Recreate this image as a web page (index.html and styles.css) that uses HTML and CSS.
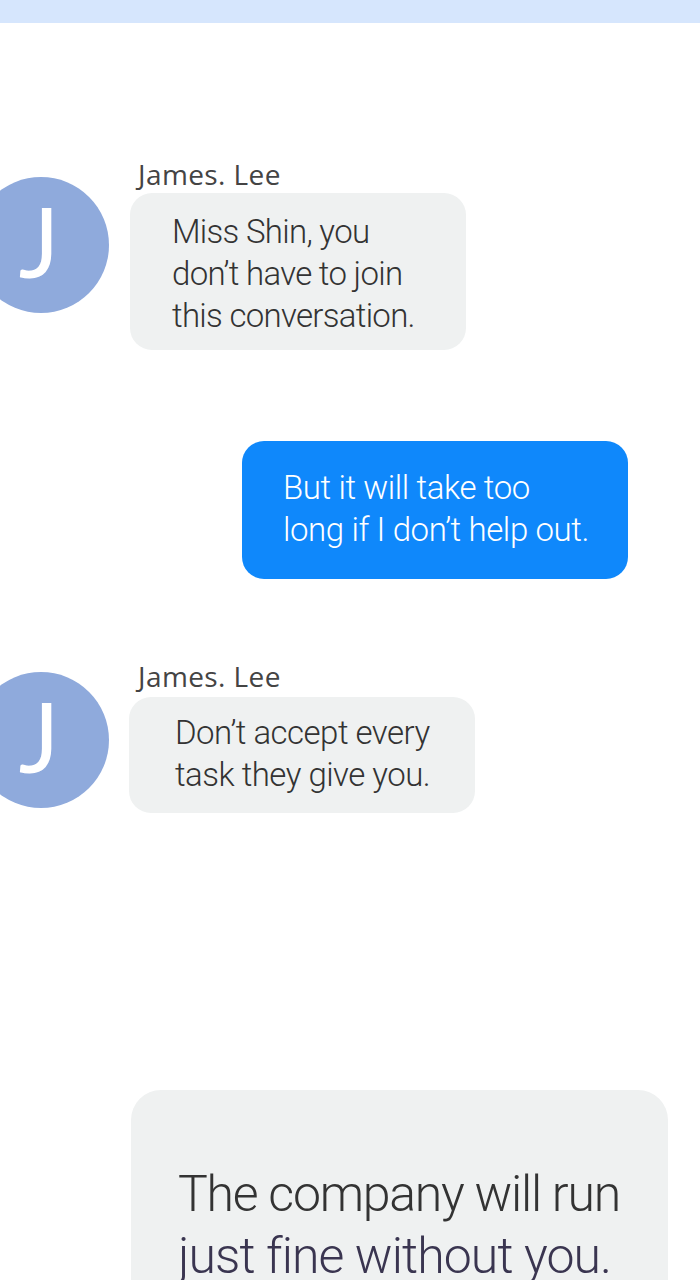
FILE: index.html
```html
<!DOCTYPE html>
<html lang="en">

<head>
    <meta charset="UTF-8">
    <title>Chat</title>
    <link rel="stylesheet" href="styles.css">
</head>

<body>
    <div class="top-bar"></div>

    <div class="msg msg-first">
        <div class="avatar">J</div>
        <div class="msg-body">
            <div class="name">James. Lee</div>
            <div class="bubble bubble-one">Miss Shin, you<br>don’t have to join<br>this conversation.</div>
        </div>
    </div>

    <div class="bubble bubble-me">But it will take too<br>long if I don’t help out.</div>

    <div class="msg msg-third">
        <div class="avatar">J</div>
        <div class="msg-body">
            <div class="name">James. Lee</div>
            <div class="bubble bubble-two">Don’t accept every<br>task they give you.</div>
        </div>
    </div>

    <div class="bubble bubble-big">The company will run<br><span class="dark">just fine without you.</span></div>
</body>

</html>
```
FILE: styles.css
```css
* {
    margin: 0;
    padding: 0;
    box-sizing: border-box;
}

html,
body {
    height: 1280px;
    overflow: hidden;
}

body {
    background-color: #fff;
    font-family: Roboto, "Liberation Sans", sans-serif;
    font-weight: 300;
    color: #333;
}

.top-bar {
    height: 23px;
    background-color: #d6e6fd;
}

.msg {
    display: flex;
    align-items: flex-start;
}

.msg-first {
    margin-top: 135px;
}

.msg-third {
    margin-top: 81px;
}

.avatar {
    flex: none;
    width: 136px;
    height: 136px;
    margin-left: -27px;
    margin-top: 19px;
    padding-right: 4px;
    border-radius: 50%;
    background-color: #8faadc;
    color: #fff;
    font-family: Lato, sans-serif;
    font-weight: 400;
    font-size: 96px;
    line-height: 128px;
    text-align: center;
}

.msg-third .avatar {
    margin-top: 12px;
}

.msg-body {
    margin-left: 21px;
}

.name {
    height: 35px;
    padding-left: 8px;
    font-family: "Open Sans", sans-serif;
    font-weight: 400;
    font-size: 28px;
    line-height: 33px;
    letter-spacing: 0.4px;
    color: #444;
}

.msg-third .name {
    height: 37px;
}

.msg-third .msg-body {
    margin-left: 20px;
}

.msg-third .name {
    padding-left: 9px;
}

.bubble {
    background-color: #eff1f1;
    border-radius: 22px;
    font-size: 33px;
    line-height: 42px;
    letter-spacing: -0.7px;
}

.bubble-one {
    width: 336px;
    height: 157px;
    padding: 18px 0 0 42px;
}

.bubble-two {
    width: 346px;
    height: 116px;
    padding: 15px 0 0 46px;
    letter-spacing: -0.52px;
}

.bubble-me {
    width: 386px;
    height: 138px;
    margin: 91px 0 0 242px;
    padding: 26px 0 0 41px;
    background-color: #0f88fb;
    color: #fff;
    letter-spacing: -0.4px;
}

.bubble-big {
    width: 537px;
    height: 240px;
    margin: 277px 0 0 131px;
    padding: 73px 0 0 47px;
    border-radius: 30px;
    font-size: 50px;
    line-height: 62px;
    letter-spacing: -1.25px;
}

.dark {
    color: #3a3550;
    letter-spacing: -0.9px;
}
```
